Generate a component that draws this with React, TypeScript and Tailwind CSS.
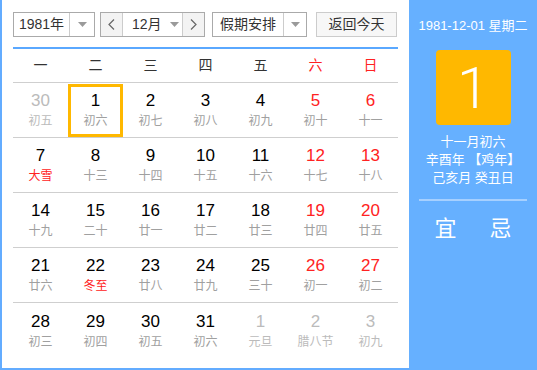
const font = "font-['Liberation_Sans','Noto_Sans_CJK_SC',sans-serif]";

type Day = { d: number; l: string; muted?: boolean; red?: boolean; lred?: boolean; sel?: boolean };

const weeks: Day[][] = [
  [
    { d: 30, l: "初五", muted: true },
    { d: 1, l: "初六", sel: true },
    { d: 2, l: "初七" },
    { d: 3, l: "初八" },
    { d: 4, l: "初九" },
    { d: 5, l: "初十", red: true },
    { d: 6, l: "十一", red: true },
  ],
  [
    { d: 7, l: "大雪", lred: true },
    { d: 8, l: "十三" },
    { d: 9, l: "十四" },
    { d: 10, l: "十五" },
    { d: 11, l: "十六" },
    { d: 12, l: "十七", red: true },
    { d: 13, l: "十八", red: true },
  ],
  [
    { d: 14, l: "十九" },
    { d: 15, l: "二十" },
    { d: 16, l: "廿一" },
    { d: 17, l: "廿二" },
    { d: 18, l: "廿三" },
    { d: 19, l: "廿四", red: true },
    { d: 20, l: "廿五", red: true },
  ],
  [
    { d: 21, l: "廿六" },
    { d: 22, l: "冬至", lred: true },
    { d: 23, l: "廿八" },
    { d: 24, l: "廿九" },
    { d: 25, l: "三十" },
    { d: 26, l: "初一", red: true },
    { d: 27, l: "初二", red: true },
  ],
  [
    { d: 28, l: "初三" },
    { d: 29, l: "初四" },
    { d: 30, l: "初五" },
    { d: 31, l: "初六" },
    { d: 1, l: "元旦", muted: true },
    { d: 2, l: "腊八节", muted: true },
    { d: 3, l: "初九", muted: true },
  ],
];

function Caret() {
  return (
    <svg width="9" height="5" viewBox="0 0 9 5">
      <path d="M0 0h9L4.5 5z" fill="#9a9a9a" />
    </svg>
  );
}

function Chevron({ dir }: { dir: "l" | "r" }) {
  return (
    <svg width="7" height="11" viewBox="0 0 7 11">
      <path
        d={dir === "l" ? "M6 0.5L1 5.5 6 10.5" : "M1 0.5L6 5.5 1 10.5"}
        stroke="#666"
        strokeWidth="1.2"
        fill="none"
      />
    </svg>
  );
}

export default function App() {
  return (
    <div className={`flex w-[537px] h-[370px] bg-white ${font}`}>
      <div className="w-[409px] border-l-2 border-b-2 border-[#63acff] pl-[11px] pr-[11px] pt-[12px]">
        <div className="flex items-center h-[25px] text-[14px] text-[#333]">
          <div className="flex w-[82px] h-[25px] border border-[#aaa]">
            <div className="w-[55px] flex items-center justify-center">1981年</div>
            <div className="flex-1 flex items-center justify-center border-l border-[#ccc]">
              <Caret />
            </div>
          </div>
          <div className="flex w-[105px] h-[25px] border border-[#aaa] ml-[5px]">
            <div className="w-[22px] flex items-center justify-center bg-[#f3f3f3] border-r border-[#ccc]">
              <Chevron dir="l" />
            </div>
            <div className="flex-1 flex items-center pl-[9px] gap-[8px]">
              <span>12月</span>
              <Caret />
            </div>
            <div className="w-[22px] flex items-center justify-center bg-[#f3f3f3] border-l border-[#ccc]">
              <Chevron dir="r" />
            </div>
          </div>
          <div className="flex w-[95px] h-[25px] border border-[#aaa] ml-[7px]">
            <div className="w-[70px] flex items-center justify-center">假期安排</div>
            <div className="flex-1 flex items-center justify-center border-l border-[#ccc]">
              <Caret />
            </div>
          </div>
          <div className="flex w-[81px] h-[25px] border border-[#ccc] bg-[#f7f7f7] ml-[9px] items-center justify-center">
            返回今天
          </div>
        </div>
        <div className="mt-[10px] h-[2px] bg-[#5aa8ff] w-[385px]" />
        <div className="grid grid-cols-7 w-[385px] h-[34px] border-b border-[#cfcfcf] text-[14px] text-[#333]">
          {["一", "二", "三", "四", "五", "六", "日"].map((w, i) => (
            <div
              key={w}
              className={`flex items-center justify-center ${i > 4 ? "text-[#f22]" : ""}`}
            >
              {w}
            </div>
          ))}
        </div>
        {weeks.map((wk, wi) => (
          <div
            key={wi}
            className={`grid grid-cols-7 w-[385px] h-[55px] ${wi < 4 ? "border-b border-[#cfcfcf]" : ""}`}
          >
            {wk.map((c, ci) => (
              <div key={ci} className="flex items-center justify-center">
                <div
                  className={`flex flex-col items-center justify-center w-[55px] h-[53px] ${
                    c.sel ? "border-[3px] border-[#ffb800]" : ""
                  }`}
                >
                  <div
                    className={`text-[17px] leading-[20px] ${
                      c.muted ? "text-[#bbb]" : c.red ? "text-[#f22]" : "text-black"
                    }`}
                  >
                    {c.d}
                  </div>
                  <div
                    className={`text-[12px] leading-[16px] mt-[2px] ${
                      c.lred ? "text-[#f22]" : c.muted ? "text-[#bbb]" : "text-[#a0a0a0]"
                    }`}
                  >
                    {c.l}
                  </div>
                </div>
              </div>
            ))}
          </div>
        ))}
      </div>
      <div className="flex-1 bg-[#66b0ff] text-white flex flex-col items-center pt-[17px]">
        <div className="text-[13px] leading-[18px]">1981-12-01 星期二</div>
        <div className="mt-[15px] w-[75px] h-[75px] rounded-[4px] bg-[#ffb800] flex items-center justify-center text-[58px] font-['Roboto',sans-serif] font-light leading-none">
          1
        </div>
        <div className="mt-[8px] text-[13px] leading-[18px] flex flex-col items-center">
          <div>十一月初六</div>
          <div>辛酉年 【鸡年】</div>
          <div>己亥月 癸丑日</div>
        </div>
        <div className="mt-[12px] w-[108px] h-[2px] bg-[#a6d0ff]" />
        <div className="mt-[15px] flex gap-[33px] text-[22px] leading-[26px]">
          <span>宜</span>
          <span>忌</span>
        </div>
      </div>
    </div>
  );
}
